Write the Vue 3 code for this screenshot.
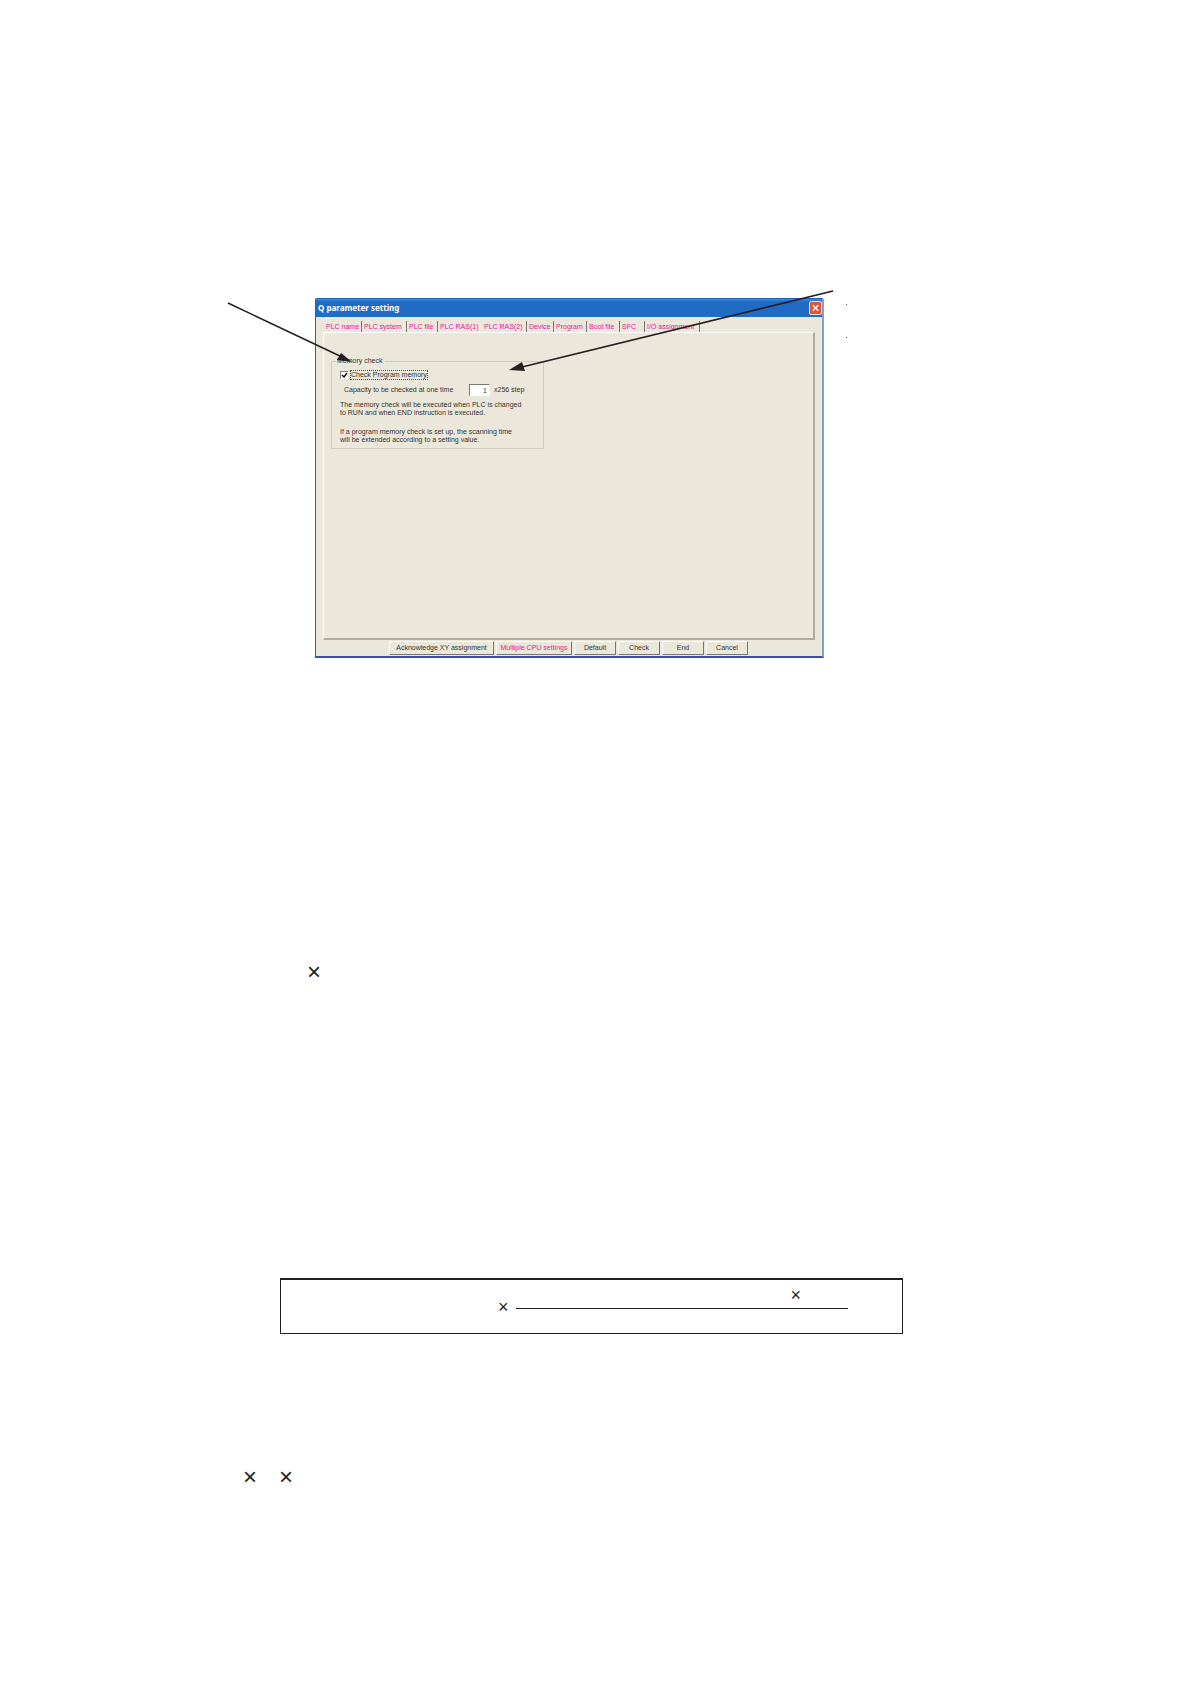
<script setup>
import { ref } from 'vue'

const tabs = [
  { name: 'PLC name', width: 38 },
  { name: 'PLC system', width: 45 },
  { name: 'PLC file', width: 31 },
  { name: 'PLC RAS(1)', width: 44 },
  { name: 'PLC RAS(2)', width: 45 },
  { name: 'Device', width: 27 },
  { name: 'Program', width: 33 },
  { name: 'Boot file', width: 33 },
  { name: 'SFC', width: 25 },
  { name: 'I/O assignment', width: 55 }
]

const actions = [
  { name: 'Acknowledge XY assignment', size: 'large' },
  { name: 'Multiple CPU settings', size: 'medium' },
  { name: 'Default', size: 'small' },
  { name: 'Check', size: 'small' },
  { name: 'End', size: 'small' },
  { name: 'Cancel', size: 'small' }
]

const activeTab = ref('PLC RAS(2)')
const checkMemory = ref(true)
const capacity = ref('1')
</script>

<template>
  <main class="page">
    <!-- dialog with callouts -->
    <section class="figure">
      <div class="window">
        <header class="title-bar">
          <span>Q parameter setting</span>
          <button class="close-btn" aria-label="Close">
            <svg viewBox="0 0 12 12" width="12" height="12">
              <path d="M3 3 L9 9 M9 3 L3 9" stroke="#fff" stroke-width="1.5" />
            </svg>
          </button>
        </header>

        <div class="tabs" role="tablist">
          <button
            v-for="tab in tabs"
            :key="tab.name"
            class="tab"
            :class="{ active: activeTab === tab.name, plain: tab.name === 'PLC RAS(1)' }"
            :style="{ width: tab.width + 'px' }"
            role="tab"
            :aria-selected="activeTab === tab.name"
            @click="activeTab = tab.name"
          >
            {{ tab.name }}
          </button>
        </div>

        <div class="panel">
          <fieldset class="group">
            <legend>Memory check</legend>
            <div class="check-row">
              <input id="check-memory" v-model="checkMemory" type="checkbox">
              <label for="check-memory">Check Program memory</label>
            </div>
            <div class="capacity-row">
              <label for="capacity">Capacity to be checked at one time</label>
              <input id="capacity" v-model="capacity" type="text">
              <span>x256 step</span>
            </div>
            <p>The memory check will be executed when PLC is changed<br>to RUN and when END instruction is executed.</p>
            <p>If a program memory check is set up, the scanning time<br>will be extended according to a setting value.</p>
          </fieldset>
        </div>

        <footer class="actions">
          <button v-for="item in actions" :key="item.name" class="action" :class="item.size">
            {{ item.name }}
          </button>
        </footer>
      </div>

      <!-- callout arrows -->
      <svg class="callouts" viewBox="0 0 640 100" width="640" height="100" aria-hidden="true">
        <g fill="#231f20" stroke="#231f20">
          <path d="M14 23 L128 77" stroke-width="1.5" />
          <path d="M138 82 L123 80 L127 73 Z" stroke="none" />
          <path d="M619 11 L308 87" stroke-width="1.8" />
          <path d="M295 90 L308 82 L311 91 Z" stroke="none" />
        </g>
        <g fill="#555">
          <rect x="632" y="24" width="1" height="1" />
          <rect x="632" y="57" width="1" height="1" />
        </g>
      </svg>
    </section>

    <p class="times first">×</p>

    <!-- formula box -->
    <section class="formula">
      <span class="sign">×</span>
      <div class="fraction">
        <span class="numerator">×</span>
        <span class="denominator"></span>
      </div>
    </section>

    <p class="times pair"><span>×</span><span>×</span></p>
  </main>
</template>

<style>
body {
  margin: 0;
  background: #fff;
}
</style>

<style scoped>
.page {
  box-sizing: border-box;
  padding: 298px 0 195px;
  font-family: "Liberation Sans", Arial, sans-serif;
  color: #231f20;
}

.page button {
  font-family: inherit;
  padding: 0;
  cursor: pointer;
}

.figure {
  position: relative;
  margin: 0 366px 0 315px;
}

/* dialog */
.window {
  box-sizing: border-box;
  border: 1px solid #1c62c4;
  border-right: 2px solid #7d9fdd;
  border-bottom: 2px solid #3a50a8;
  border-radius: 2px 2px 0 0;
  background: #ebe8db;
  font-size: 7px;
  line-height: 8px;
}

.title-bar {
  display: flex;
  align-items: center;
  justify-content: space-between;
  height: 18px;
  padding: 0 0 0 2px;
  background: linear-gradient(#3b8ade 0, #2069c0 3px, #1f6dc8 100%);
  color: #fff;
  font-family: "Noto Sans", sans-serif;
  font-size: 8px;
  font-weight: bold;
}

.close-btn {
  display: flex;
  width: 13px;
  height: 14px;
  align-items: center;
  justify-content: center;
  border: 1px solid #f3dcd8;
  border-radius: 2px;
  background: #d9593f;
}

.tabs {
  display: flex;
  height: 11px;
  margin: 4px 7px 0 8px;
}

.tab {
  flex: none;
  box-sizing: border-box;
  border: 0;
  border-right: 1px solid #77756c;
  background: none;
  color: #e5179a;
  font-size: 7px;
  line-height: 10px;
  text-align: left;
  text-indent: 2px;
  white-space: nowrap;
}

.tab.plain {
  border-right-color: transparent;
}

.panel {
  box-sizing: border-box;
  min-height: 308px;
  margin: 0 7px;
  padding: 24px 7px;
  border: 1px solid #fff;
  border-right: 2px solid #aeac9f;
  border-bottom: 2px solid #aeac9f;
}

.group {
  box-sizing: border-box;
  width: 213px;
  min-width: 0;
  height: 92px;
  margin: 0;
  padding: 0 8px;
  border: 1px solid #cfcdc0;
  color: #33322e;
}

.group legend {
  margin-left: -4px;
  padding: 0 2px 0 1px;
}

.check-row {
  display: flex;
  align-items: center;
  gap: 2px;
  height: 12px;
  margin-top: 4px;
}

.check-row input {
  appearance: none;
  width: 8px;
  height: 8px;
  margin: 0;
  border-top: 1px solid #88867c;
  border-left: 1px solid #88867c;
  background: #fff;
}

.check-row input:checked {
  background: #fff url("data:image/svg+xml,%3Csvg xmlns='http://www.w3.org/2000/svg' viewBox='0 0 7 7'%3E%3Cpath d='M1 3 L3 5 L6 1' fill='none' stroke='%23000' stroke-width='1.3'/%3E%3C/svg%3E") center / 7px 7px no-repeat;
}

.check-row label {
  border: 1px dotted #55534b;
}

.capacity-row {
  display: flex;
  align-items: center;
  height: 12px;
  margin-top: 3px;
  padding-left: 4px;
}

.capacity-row label {
  width: 125px;
}

.capacity-row input {
  box-sizing: border-box;
  width: 21px;
  height: 12px;
  margin: 0 4px 0 0;
  padding: 0 2px;
  border: 1px solid #fff;
  border-top-color: #7b796f;
  border-left-color: #7b796f;
  background: #fff;
  color: inherit;
  font: inherit;
  text-align: right;
}

.group p {
  margin: 5px 0 11px;
  white-space: nowrap;
}

.group p + p {
  margin: 0;
}

.actions {
  display: flex;
  gap: 2px;
  padding: 1px 0 1px 73px;
}

.action {
  box-sizing: border-box;
  height: 14px;
  border: 1px solid #fff;
  border-right: 1px solid #77756c;
  border-bottom: 1px solid #77756c;
  background: #ebe8db;
  color: #33322e;
  font-size: 7px;
  line-height: 12px;
  white-space: nowrap;
}

.large {
  width: 105px;
}

.medium {
  width: 76px;
  color: #e5179a;
}

.small {
  width: 42px;
}

/* callouts lie over the dialog */
.callouts {
  position: absolute;
  top: -18px;
  left: -101px;
  pointer-events: none;
}

/* formulas */
.times {
  display: flex;
  margin: 0;
  font-size: 24px;
  line-height: 24px;
}

.first {
  margin: 302px 0 0 307px;
}

.formula {
  display: flex;
  box-sizing: border-box;
  min-height: 56px;
  margin: 294px 287px 0 280px;
  padding: 6px 54px 0 217px;
  border: 1px solid #231f20;
  border-top-width: 2px;
  font-size: 18px;
  line-height: 18px;
}

.sign {
  flex: none;
  width: 18px;
  padding-top: 12px;
}

.fraction {
  flex: 1;
}

.numerator {
  display: flex;
  height: 22px;
  justify-content: flex-end;
  padding-right: 47px;
  border-bottom: 1px solid #231f20;
}

.pair {
  gap: 22px;
  margin: 131px 0 0 243px;
}
</style>
